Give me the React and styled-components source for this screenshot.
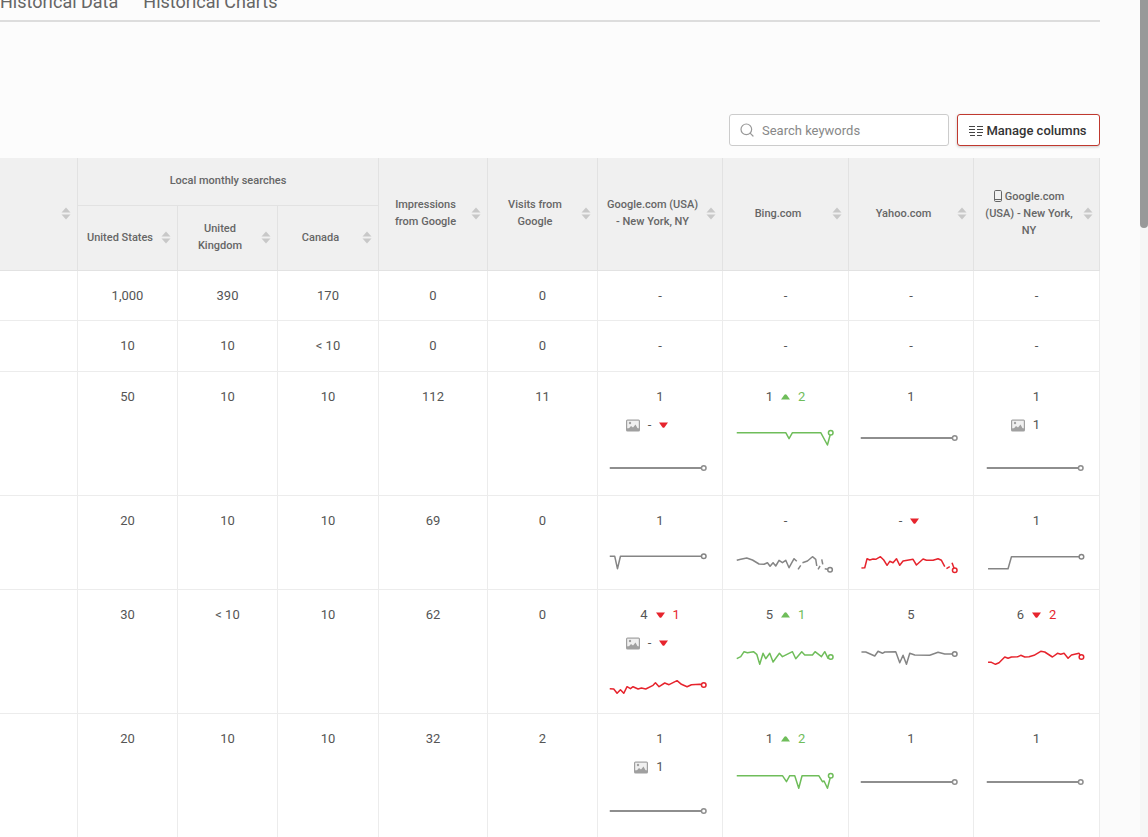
import React from "react";
import styled, { createGlobalStyle } from "styled-components";
import { Search } from "lucide-react";

const GlobalStyle = createGlobalStyle`
  html, body {
    margin: 0;
    padding: 0;
    height: 100%;
    overflow: hidden;
    background: #fcfcfc;
    font-family: Roboto, "Liberation Sans", sans-serif;
  }
`;

const Page = styled.div`
  display: flex;
  width: 1148px;
  height: 837px;
  overflow: hidden;
`;

const Main = styled.div`
  flex: 0 0 1100px;
  width: 1100px;
`;

const Gutter = styled.div`
  flex: 1;
  background: #fbfbfb;
`;

const ScrollTrack = styled.div`
  flex: 0 0 8px;
  background: #f6f6f6;
`;

const ScrollThumb = styled.div`
  height: 228px;
  background: #999999;
  border-radius: 0 0 4px 4px;
`;

const Tabs = styled.div`
  display: flex;
  align-items: flex-end;
  gap: 25px;
  height: 20px;
  overflow: hidden;
  border-bottom: 2px solid #dddddd;
`;

const Tab = styled.div`
  font-size: 18px;
  line-height: 28px;
  color: #666666;
  white-space: nowrap;
  margin-bottom: 4px;
`;

const Toolbar = styled.div`
  display: flex;
  justify-content: flex-end;
  gap: 8px;
  padding-top: 92px;
  height: 44px;
`;

const SearchBox = styled.label`
  display: flex;
  align-items: center;
  box-sizing: border-box;
  width: 220px;
  height: 32px;
  padding-left: 9px;
  background: #ffffff;
  border: 1px solid #cccccc;
  border-radius: 3px;
  color: #999999;
`;

const SearchInput = styled.input`
  flex: 1;
  min-width: 0;
  margin-left: 7px;
  padding: 0;
  border: 0;
  outline: 0;
  background: transparent;
  font: 13px Roboto, sans-serif;
  color: #666666;
  &::placeholder {
    color: #888888;
    opacity: 1;
  }
`;

const ManageButton = styled.button`
  display: flex;
  align-items: center;
  justify-content: center;
  gap: 3px;
  box-sizing: border-box;
  width: 143px;
  height: 32px;
  padding: 0 1px 0 0;
  background: #ffffff;
  border: 1px solid #c0392f;
  border-radius: 3px;
  box-shadow: 0 1px 3px rgba(0, 0, 0, 0.2);
  font: 500 13px Roboto, sans-serif;
  color: #333333;
`;

const Table = styled.table`
  width: 1100px;
  table-layout: fixed;
  border-collapse: separate;
  border-spacing: 0;
`;

const HeadCell = styled.th`
  box-sizing: border-box;
  height: ${(props) => props.$h}px;
  padding: 0 0 2px;
  background: #f0f0f0;
  border-right: 1px solid #e2e2e2;
  border-bottom: 1px solid #e2e2e2;
  font-size: 11px;
  font-weight: 500;
  line-height: 17px;
  color: #666666;
`;

const HeadInner = styled.div`
  display: flex;
  align-items: center;
  gap: 5px;
  padding: 0 6px;
`;

const HeadLabel = styled.div`
  flex: 1;
  min-width: 0;
  text-align: center;
`;

const SortIcon = styled.svg`
  flex: 0 0 10px;
  width: 10px;
  height: 13px;
  fill: #c8c8c8;
`;

const PhoneIcon = styled.svg`
  width: 8px;
  height: 12px;
  margin-right: 3px;
  vertical-align: -2px;
  fill: none;
  stroke: #666666;
`;

const Row = styled.tr`
  height: ${(props) => props.$h}px;
`;

const Cell = styled.td`
  box-sizing: border-box;
  padding: ${(props) => (props.$compact ? "13px 0 0" : "13px 0 7px")};
  vertical-align: top;
  text-align: center;
  background: #ffffff;
  border-right: 1px solid #ececec;
  border-bottom: 1px solid #ececec;
  font-size: 13px;
  line-height: 24px;
  color: #555555;
`;

const ValueLine = styled.div`
  display: flex;
  align-items: center;
  justify-content: center;
  gap: 8px;
  height: 24px;
`;

const ImageLine = styled(ValueLine)`
  box-sizing: border-box;
  height: 30px;
  padding-top: 2px;
`;

const Delta = styled.span`
  color: ${(props) => props.$color};
  &:empty {
    margin-left: -4px;
  }
`;

const Arrow = styled.svg`
  width: 9px;
  height: 6px;
  fill: ${(props) => props.$color};
`;

const ImageIcon = styled.svg`
  width: 14px;
  height: 13px;
  margin-left: -22px;
`;

const Spark = styled.svg`
  display: block;
  width: 100px;
  height: 40px;
  margin: 9px auto 0;
  overflow: visible;
  fill: none;
`;

const GREEN = "#6fbd5a";
const RED = "#e6242d";
const GREY = "#858585";

const trendColor = { up: GREEN, down: RED };

const SortArrows = () => (
  <SortIcon viewBox="0 0 10 13">
    <path d="M5 0.5 9.5 5.5H0.5Z" />
    <path d="M5 12.5 9.5 7.5H0.5Z" />
  </SortIcon>
);

const ColumnsIcon = () => (
  <svg width="14" height="11" viewBox="0 0 14 11" fill="none" stroke="#444444">
    <path d="M0 1.5H6M0 4.5H6M0 7.5H6M1 10.5H6M8 1.5H14M8 4.5H14M8 7.5H14M8 10.5H13" />
  </svg>
);

const PictureIcon = () => (
  <ImageIcon viewBox="0 0 14 13">
    <rect x="0" y="0.5" width="14" height="12" rx="1.5" fill="#a0a0a0" />
    <rect x="1.2" y="1.7" width="11.6" height="7.6" fill="#f0f0f0" />
    <circle cx="4" cy="4" r="1.2" fill="#a0a0a0" />
    <path d="M1.5 11 5 7 7 8.5 9.5 5.5 12.5 11Z" fill="#a0a0a0" />
  </ImageIcon>
);

const TrendArrow = ({ trend }) => (
  <Arrow viewBox="0 0 9 6" $color={trendColor[trend]}>
    {trend === "up" ? (
      <path d="M3.4 0.8Q4.5 -0.2 5.6 0.8L9 5.5H0Z" />
    ) : (
      <path d="M0 0.5H9L5.4 5.4Q4.5 6.2 3.6 5.4Z" />
    )}
  </Arrow>
);

const Sparkline = ({ segments, color = GREY, width = 1.5 }) => {
  const last = segments[segments.length - 1].split(" ").pop().split(",");
  return (
    <Spark viewBox="0.75 0 100 40">
      {segments.map((points) => (
        <polyline key={points} points={points} stroke={color} strokeWidth={width} strokeLinejoin="round" />
      ))}
      <circle cx={last[0]} cy={last[1]} r="2.3" fill="#ffffff" stroke={color} strokeWidth="1.5" />
    </Spark>
  );
};

const flat = (y) => ({ segments: [`0.5,${y} 94.5,${y}`], color: "#8e8e8e", width: 2 });

const Rank = ({ value, delta, trend, image, spark }) => (
  <Cell>
    <ValueLine>
      <span>{value}</span>
      {trend && <TrendArrow trend={trend} />}
      {trend && <Delta $color={trendColor[trend]}>{delta}</Delta>}
    </ValueLine>
    {image && (
      <ImageLine>
        <PictureIcon />
        <span>{image.value}</span>
        {image.trend && <TrendArrow trend={image.trend} />}
        {image.trend && <Delta />}
      </ImageLine>
    )}
    <Sparkline {...spark} />
  </Cell>
);

const columns = [78, 100, 100, 101, 109, 110, 125, 126, 125, 126];

const emptyRows = [
  { h: 50, values: ["1,000", "390", "170", "0", "0"] },
  { h: 51, values: ["10", "10", "< 10", "0", "0"] },
];

const rankRows = [
  {
    h: 124,
    values: ["50", "10", "10", "112", "11"],
    ranks: [
      { value: "1", image: { value: "-", trend: "down" }, spark: flat(20) },
      {
        value: "1",
        trend: "up",
        delta: "2",
        spark: {
          color: GREEN,
          segments: ["1.5,14.7 50.5,14.7 53.8,20.7 57.2,14.7 85.5,14.7 92.2,27 95.5,14.7"],
        },
      },
      { value: "1", spark: flat(20) },
      { value: "1", image: { value: "1" }, spark: flat(20) },
    ],
  },
  {
    h: 94,
    values: ["20", "10", "10", "69", "0"],
    ranks: [
      { value: "1", spark: { segments: ["0.5,14.3 5.5,14.3 8.2,26.7 11.2,14.3 94.5,14.3"] } },
      {
        value: "-",
        spark: {
          segments: [
            "1.5,18.3 5.5,17.3 11.5,16 17.2,18 23.8,22 28.8,22.3 32.2,20.7 34.8,24.3 37.8,20.7 40.5,24 43.8,18.3 47.2,20.7 50.5,18.3 53.8,25.7 58.8,16.7 61.5,19.3",
            "62.8,27.3 65.5,23.3",
            "67.2,20.7 72.2,19 77.2,14.7 80.5,17.3 81.5,24",
            "82.8,27.3 84.8,24",
            "86.5,17.3 87.5,22.3",
            "89.5,26.7 94.8,27.7",
          ],
        },
      },
      {
        value: "-",
        trend: "down",
        spark: {
          color: RED,
          segments: [
            "1.2,26 4.5,25.7 6.8,16.7 9.5,18 12.8,17 15.5,17.3 20.2,14.7 23.5,18 26.8,23.3 29.5,19.3 32.8,20.7 36.2,16.7 39.5,23.3 42.8,19 52.8,17.3 56.2,23 62.8,17 66.2,18.3 72.8,18.3 77.8,16.7 81.2,18.3 84.5,24.7",
            "86.2,26.7 89.5,24.7",
            "91.8,20.7 94.5,28.3",
          ],
        },
      },
      { value: "1", spark: { segments: ["1.8,26.7 21.8,26.7 25.2,14.7 95.2,14.7"] } },
    ],
  },
  {
    h: 124,
    values: ["30", "< 10", "10", "62", "0"],
    ranks: [
      {
        value: "4",
        trend: "down",
        delta: "1",
        image: { value: "-", trend: "down" },
        spark: {
          color: RED,
          segments: [
            "0.5,22.7 4.5,23 7.8,27.3 11.2,23.7 14.5,27.3 17.8,20.7 21.2,22.7 23.8,20.7 28.8,23 32.2,22 36.5,23 43.8,19.3 46.2,16.7 49.8,20.7 55.5,17 59.8,18.7 67.8,14.7 72.2,18.3 77.8,20.7 82.2,18.7 90.5,18.3 94.5,19",
          ],
        },
      },
      {
        value: "5",
        trend: "up",
        delta: "1",
        spark: {
          color: GREEN,
          segments: [
            "1.5,22.7 5.5,20.7 8.8,15.7 12.2,16.7 18.2,15.7 21.5,18.3 24.5,28.3 27.8,17.3 30.5,22.7 34.5,17.3 37.8,26 44.2,17.3 47.2,20.7 57.2,15.7 60.5,22.7 66.5,15.7 69.5,19 77.2,19 79.8,15.7 86.2,20.7 89.5,15.7 92.8,22.3 95.5,21",
          ],
        },
      },
      {
        value: "5",
        spark: {
          segments: [
            "1.2,16 5.5,16 14.5,20 17.8,15.3 22.2,17.3 24.5,16 35.5,15.7 39.5,26.7 42.8,19.3 46.2,28.3 49.5,17.3 54.5,19 69.5,19.3 77.8,16.3 84.5,18 94.5,18",
          ],
        },
      },
      {
        value: "6",
        trend: "down",
        delta: "2",
        spark: {
          color: RED,
          segments: [
            "1.8,26.3 5.2,26.3 9.2,28.3 12.8,26.7 18.5,21 21.8,22.3 25.2,21 31.8,20.7 34.5,19.3 38.5,21 42.8,20.7 47.8,19.3 54.5,15.3 58.5,16 66.2,21 71.2,17.3 74.5,18.3 77.8,17.3 81.8,22.3 85.2,19 92.8,17.3 95.2,21",
          ],
        },
      },
    ],
  },
  {
    h: 124,
    values: ["20", "10", "10", "32", "2"],
    ranks: [
      { value: "1", image: { value: "1" }, spark: flat(21) },
      {
        value: "1",
        trend: "up",
        delta: "2",
        spark: {
          color: GREEN,
          segments: [
            "1.5,15.7 47.2,15.7 51.2,21.7 54.5,15.7 59.5,15.7 63.5,28.3 66.8,15.7 83.5,15.7 87.2,21.7 88.8,21 92.2,28.3 95.5,15.7",
          ],
        },
      },
      { value: "1", spark: flat(22) },
      { value: "1", spark: flat(22) },
    ],
  },
];

const HeadContent = ({ children }) => (
  <HeadInner>
    <HeadLabel>{children}</HeadLabel>
    <SortArrows />
  </HeadInner>
);

const App = () => (
  <Page>
    <GlobalStyle />
    <Main>
      <Tabs>
        <Tab>Historical Data</Tab>
        <Tab>Historical Charts</Tab>
      </Tabs>
      <Toolbar>
        <SearchBox>
          <Search size={16} strokeWidth={1.8} />
          <SearchInput placeholder="Search keywords" />
        </SearchBox>
        <ManageButton>
          <ColumnsIcon />
          Manage columns
        </ManageButton>
      </Toolbar>
      <Table>
        <colgroup>
          {columns.map((width, i) => (
            <col key={i} width={width} />
          ))}
        </colgroup>
        <thead>
          <tr>
            <HeadCell rowSpan={2} $h={113}>
              <HeadContent />
            </HeadCell>
            <HeadCell colSpan={3} $h={48}>
              Local monthly searches
            </HeadCell>
            <HeadCell rowSpan={2}>
              <HeadContent>Impressions from Google</HeadContent>
            </HeadCell>
            <HeadCell rowSpan={2}>
              <HeadContent>Visits from Google</HeadContent>
            </HeadCell>
            <HeadCell rowSpan={2}>
              <HeadContent>
                Google.com (USA)
                <br />- New York, NY
              </HeadContent>
            </HeadCell>
            <HeadCell rowSpan={2}>
              <HeadContent>Bing.com</HeadContent>
            </HeadCell>
            <HeadCell rowSpan={2}>
              <HeadContent>Yahoo.com</HeadContent>
            </HeadCell>
            <HeadCell rowSpan={2}>
              <HeadContent>
                <PhoneIcon viewBox="0 0 8 12">
                  <rect x="0.5" y="0.5" width="7" height="11" rx="1.2" />
                  <path d="M0.5 9.5H7.5" />
                </PhoneIcon>
                Google.com (USA) - New York, NY
              </HeadContent>
            </HeadCell>
          </tr>
          <tr>
            <HeadCell $h={65}>
              <HeadContent>United States</HeadContent>
            </HeadCell>
            <HeadCell $h={65}>
              <HeadContent>United Kingdom</HeadContent>
            </HeadCell>
            <HeadCell $h={65}>
              <HeadContent>Canada</HeadContent>
            </HeadCell>
          </tr>
        </thead>
        <tbody>
          {emptyRows.map((row) => (
            <Row key={row.h} $h={row.h}>
              <Cell $compact />
              {row.values.map((value, i) => (
                <Cell key={i} $compact>
                  {value}
                </Cell>
              ))}
              {[0, 1, 2, 3].map((i) => (
                <Cell key={i} $compact>
                  -
                </Cell>
              ))}
            </Row>
          ))}
          {rankRows.map((row, r) => (
            <Row key={r} $h={row.h}>
              <Cell />
              {row.values.map((value, i) => (
                <Cell key={i}>{value}</Cell>
              ))}
              {row.ranks.map((rank, i) => (
                <Rank key={i} {...rank} />
              ))}
            </Row>
          ))}
        </tbody>
      </Table>
    </Main>
    <Gutter />
    <ScrollTrack>
      <ScrollThumb />
    </ScrollTrack>
  </Page>
);

export default App;
